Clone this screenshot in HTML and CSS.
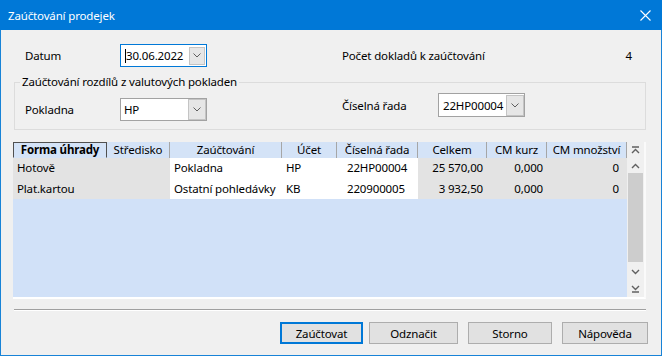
FILE: index.html
```html
<!DOCTYPE html>
<html lang="cs">
<head>
<meta charset="utf-8">
<title>Zaúčtování prodejek</title>
<link rel="stylesheet" href="styles.css">
</head>
<body>
<div class="window">
  <div class="titlebar">
    <span class="title">Zaúčtování prodejek</span>
    <svg class="close" width="11" height="11" viewBox="0 0 11 11"><path d="M0.5 0.5L10.5 10.5M10.5 0.5L0.5 10.5" stroke="#fff" stroke-width="1.1" fill="none"/></svg>
  </div>
  <div class="content">
    <div class="toprow">
      <span class="label label-first">Datum</span>
      <div class="combo combo-focus">
        <span class="value"><span class="caret"></span>30.06.2022</span>
        <span class="dd dd-small"><svg width="8" height="5" viewBox="0 0 8 5"><path d="M0.5 0.5L4 4L7.5 0.5" stroke="#5f5f5f" fill="none"/></svg></span>
      </div>
      <span class="label label-count">Počet dokladů k zaúčtování</span>
      <span class="count">4</span>
    </div>

    <fieldset class="group">
      <legend>Zaúčtování rozdílů z valutových pokladen</legend>
      <div class="grouprow">
        <div class="field field-left">
          <span class="label label-first">Pokladna</span>
          <div class="combo">
            <span class="value">HP</span>
            <span class="dd"><svg width="8" height="5" viewBox="0 0 8 5"><path d="M0.5 0.5L4 4L7.5 0.5" stroke="#5f5f5f" fill="none"/></svg></span>
          </div>
        </div>
        <div class="field field-right">
          <span class="label label-series">Číselná řada</span>
          <div class="combo combo-series">
            <span class="value">22HP00004</span>
            <span class="dd"><svg width="8" height="5" viewBox="0 0 8 5"><path d="M0.5 0.5L4 4L7.5 0.5" stroke="#5f5f5f" fill="none"/></svg></span>
          </div>
        </div>
      </div>
    </fieldset>

    <div class="grid">
      <div class="table">
        <div class="th th-sorted">Forma úhrady</div>
        <div class="th">Středisko</div>
        <div class="th">Zaúčtování</div>
        <div class="th">Účet</div>
        <div class="th">Číselná řada</div>
        <div class="th">Celkem</div>
        <div class="th">CM kurz</div>
        <div class="th">CM množství</div>

        <div class="td grey">Hotově</div>
        <div class="td grey"></div>
        <div class="td white">Pokladna</div>
        <div class="td white">HP</div>
        <div class="td white td-series">22HP00004</div>
        <div class="td grey num">25 570,00</div>
        <div class="td grey num">0,000</div>
        <div class="td grey num num-last">0</div>

        <div class="td grey">Plat.kartou</div>
        <div class="td grey"></div>
        <div class="td white">Ostatní pohledávky</div>
        <div class="td white">KB</div>
        <div class="td white td-series">220900005</div>
        <div class="td grey num">3 932,50</div>
        <div class="td grey num">0,000</div>
        <div class="td grey num num-last">0</div>
      </div>
      <div class="scroll">
        <div class="sb sb-first"><svg width="9" height="8" viewBox="0 0 9 8"><path d="M1 1H8M1 7L4.5 3.5L8 7" stroke="#606060" stroke-width="1.4" fill="none"/></svg></div>
        <div class="sb sb-up"><svg width="9" height="6" viewBox="0 0 9 6"><path d="M1 5L4.5 1.5L8 5" stroke="#606060" stroke-width="1.4" fill="none"/></svg></div>
        <div class="thumb"></div>
        <div class="track"></div>
        <div class="sb sb-down"><svg width="9" height="6" viewBox="0 0 9 6"><path d="M1 1L4.5 4.5L8 1" stroke="#606060" stroke-width="1.4" fill="none"/></svg></div>
        <div class="sb sb-last"><svg width="9" height="8" viewBox="0 0 9 8"><path d="M1 1L4.5 4.5L8 1M1 7H8" stroke="#606060" stroke-width="1.4" fill="none"/></svg></div>
      </div>
    </div>

    <div class="separator"></div>

    <div class="buttons">
      <button class="btn btn-default">Zaúčtovat</button>
      <button class="btn btn-mark">Odznačit</button>
      <button class="btn btn-cancel">Storno</button>
      <button class="btn btn-help">Nápověda</button>
    </div>
  </div>
</div>
</body>
</html>
```

FILE: styles.css
```css
* {
  box-sizing: border-box;
}

html,
body {
  margin: 0;
  padding: 0;
}

body {
  width: 662px;
  height: 356px;
  overflow: hidden;
  background: #f0f0f0;
  color: #000;
  font-family: "Segoe UI", "Noto Sans", sans-serif;
  font-size: 11.5px;
  letter-spacing: -0.15px;
}

.window {
  width: 662px;
  height: 356px;
  display: flex;
  flex-direction: column;
  border: 1px solid #1883d7;
  border-top: none;
  background: #f0f0f0;
}

.titlebar {
  height: 30px;
  margin: 0 -1px;
  padding: 0 11px 0 8px;
  display: flex;
  align-items: center;
  justify-content: space-between;
  background: #0078d7;
  color: #fff;
}

.title {
  font-size: 11.5px;
}

.content {
  flex: 1;
  display: flex;
  flex-direction: column;
  padding: 14px 15px 0 12px;
}

/* top row */
.toprow {
  display: flex;
  align-items: center;
  height: 23px;
}

.label {
  white-space: nowrap;
}

.label-first {
  width: 107px;
  padding-left: 12px;
}

.label-count {
  margin-left: 135px;
}

.count {
  margin-left: auto;
  margin-right: 14px;
}

/* combo boxes */
.combo {
  width: 87px;
  height: 23px;
  display: flex;
  align-items: center;
  padding-left: 3px;
  border: 1px solid #a2a2a2;
  background: #fff;
}

.combo-focus {
  border-color: #0078d7;
  padding-left: 5px;
}

.value {
  position: relative;
  white-space: nowrap;
}

.caret {
  position: absolute;
  left: -1px;
  top: 1px;
  width: 1px;
  height: 14px;
  background: #000;
}

.dd {
  margin-left: auto;
  margin-right: 0;
  width: 18px;
  height: 21px;
  flex-shrink: 0;
  display: flex;
  align-items: center;
  justify-content: center;
  border: 1px solid #c4c4c4;
  background: #e6e6e6;
}

.dd-small {
  width: 16px;
  height: 18px;
  margin-right: 1px;
}

/* group box */
.group {
  margin: 7px 0 0 1px;
  padding: 3px 10px 8px 10px;
  border: 1px solid #dcdcdc;
  min-width: 0;
}

.group legend {
  margin-left: -5px;
  padding: 0 2px;
  line-height: 16px;
}

.grouprow {
  display: flex;
  align-items: flex-start;
}

.field {
  display: flex;
  align-items: center;
}

.field-left {
  margin-top: 5px;
}

.field-left .label-first {
  width: 95px;
  padding-left: 0;
}

.field-right {
  margin-left: 135px;
}

.label-series {
  width: 96px;
}

.combo-series {
  height: 24px;
  padding-left: 4px;
}

/* grid */
.grid {
  margin-top: 12px;
  width: 633px;
  height: 157px;
  display: flex;
  border-bottom: 2px solid #fff;
  border-right: 2px solid #fafafa;
}

.table {
  width: 614px;
  display: grid;
  grid-template-columns: 94px 63px 112px 55px 81px 69px 60px 80px;
  grid-template-rows: 16px 21px 20px;
  align-content: start;
  background: #d1e1f8;
}

.th {
  background: #d4e3f7;
  border-right: 1px solid #a6a6a6;
  text-align: center;
  line-height: 15px;
  white-space: nowrap;
  overflow: hidden;
}

.th-sorted {
  font-weight: bold;
  border: 1px solid #505050;
  border-bottom-color: #d4e3f7;
  line-height: 13px;
}

.td {
  padding: 0 4px;
  line-height: 20px;
  white-space: nowrap;
  overflow: hidden;
}

.grey {
  background: #e3e3e3;
}

.white {
  background: #fff;
}

.td-series {
  padding-left: 10px;
}

.num {
  text-align: right;
}

.num-last {
  padding-right: 8px;
}

/* scrollbar */
.scroll {
  width: 17px;
  display: flex;
  flex-direction: column;
  background: #f0f0f0;
}

.sb {
  display: flex;
  align-items: center;
  justify-content: center;
}

.sb-first {
  height: 16px;
}

.sb-up {
  height: 15px;
}

.thumb {
  height: 89px;
  margin: 0 1px;
  background: #cdcdcd;
}

.track {
  height: 2px;
}

.sb-down {
  height: 16px;
}

.sb-last {
  height: 17px;
}

/* separator */
.separator {
  margin: 10px 0 0 1px;
  border-top: 1px solid #a0a0a0;
  border-bottom: 1px solid #fff;
}

/* buttons */
.buttons {
  display: flex;
  justify-content: flex-end;
  margin-top: 11px;
  margin-right: -2px;
}

.btn {
  height: 22px;
  padding: 0;
  border: 1px solid #adadad;
  background: #e1e1e1;
  color: #000;
  font-family: inherit;
  font-size: 11.5px;
  letter-spacing: -0.15px;
}

.btn-default {
  width: 83px;
  border: 2px solid #0078d7;
}

.btn-mark {
  width: 89px;
  margin-left: 6px;
}

.btn-cancel {
  width: 84px;
  margin-left: 10px;
}

.btn-help {
  width: 86px;
  margin-left: 10px;
}
```
